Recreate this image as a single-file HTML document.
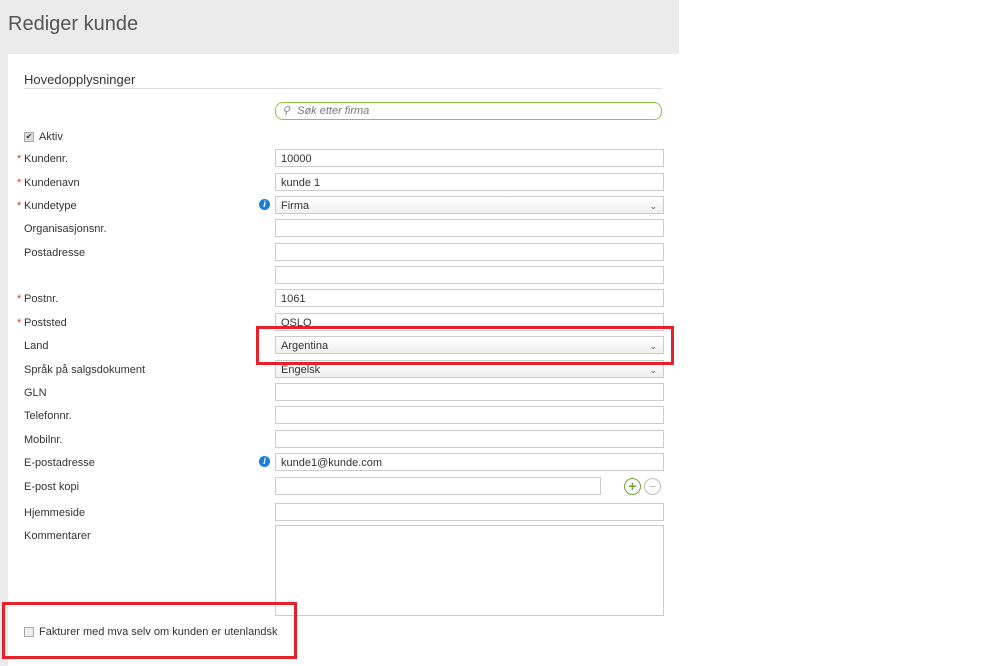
<!DOCTYPE html><html><head><style>
body{margin:0;width:999px;height:666px;background:#fff;font-family:"Liberation Sans",sans-serif;position:relative;overflow:hidden;color:#333}
.bg{position:absolute;left:0;top:0;width:679px;height:666px;background:#ebebeb}
.panel{position:absolute;left:8px;top:54px;width:671px;height:612px;background:#fff}
.t{position:absolute;left:8px;top:13px;font-size:20px;color:#555}
.a{position:absolute}
.lbl{position:absolute;left:24px;font-size:11px;color:#333}
.st{position:absolute;left:17px;font-size:11px;color:#d33}
.in{position:absolute;left:275px;height:16px;border:1px solid #ccc;background:#fff;font-size:11px;line-height:18px;padding-left:5px;box-sizing:content-box;width:382px}
.sel{background:linear-gradient(#fff,#f0f0f0)}
.chev{position:absolute;right:6px;top:0;font-size:9px;color:#555}
.info{position:absolute;left:259px;width:11px;height:11px;border-radius:50%;background:#1a7fd0;color:#fff;font-size:9px;font-weight:bold;font-style:italic;text-align:center;line-height:11px}
.red{position:absolute;border:3px solid #e8202a}
</style></head><body>
<div class="bg"></div><div class="panel"></div>
<div class="t">Rediger kunde</div>
<div class="a" style="left:24px;top:72px;font-size:13px;color:#333">Hovedopplysninger</div>
<div class="a" style="left:24px;top:88px;width:639px;height:1px;background:#ddd"></div>
<div class="a" style="left:275px;top:102px;width:385px;height:16px;border:1.5px solid #8cc63f;border-radius:8px;font-size:11px;font-style:italic;color:#777;line-height:17px"><span style="margin-left:6px;color:#888">&#9906;</span> <span style="margin-left:4px">Søk etter firma</span></div>
<div class="a" style="left:24px;top:132px;width:8px;height:8px;border:1px solid #aaa;background:#ddd;font-size:8px;line-height:8px;text-align:center">✔</div>
<div class="lbl" style="left:39px;top:131px">Aktiv</div>

<div class="st" style="top:153px">*</div><div class="lbl" style="top:153px">Kundenr.</div><div class="in" style="top:149px">10000</div>
<div class="st" style="top:177px">*</div><div class="lbl" style="top:177px">Kundenavn</div><div class="in" style="top:173px">kunde 1</div>
<div class="st" style="top:200px">*</div><div class="lbl" style="top:200px">Kundetype</div><div class="info" style="top:199px">i</div><div class="in sel" style="top:196px">Firma<span class="chev">&#8964;</span></div>
<div class="lbl" style="top:223px">Organisasjonsnr.</div><div class="in" style="top:219px"></div>
<div class="lbl" style="top:247px">Postadresse</div><div class="in" style="top:243px"></div>
<div class="in" style="top:266px"></div>
<div class="st" style="top:293px">*</div><div class="lbl" style="top:293px">Postnr.</div><div class="in" style="top:289px">1061</div>
<div class="st" style="top:317px">*</div><div class="lbl" style="top:317px">Poststed</div><div class="in" style="top:313px">OSLO</div>
<div class="lbl" style="top:340px">Land</div><div class="in sel" style="top:336px">Argentina<span class="chev">&#8964;</span></div>
<div class="lbl" style="top:364px">Språk på salgsdokument</div><div class="in sel" style="top:360px">Engelsk<span class="chev">&#8964;</span></div>
<div class="lbl" style="top:387px">GLN</div><div class="in" style="top:383px"></div>
<div class="lbl" style="top:410px">Telefonnr.</div><div class="in" style="top:406px"></div>
<div class="lbl" style="top:434px">Mobilnr.</div><div class="in" style="top:430px"></div>
<div class="lbl" style="top:457px">E-postadresse</div><div class="info" style="top:456px">i</div><div class="in" style="top:453px">kunde1@kunde.com</div>
<div class="lbl" style="top:481px">E-post kopi</div><div class="in" style="top:477px;width:319px"></div>
<div class="a" style="left:624px;top:478px;width:15px;height:15px;border:1.5px solid #6aa82a;border-radius:50%;color:#6aa82a;font-size:14px;line-height:15px;text-align:center;font-weight:bold">+</div>
<div class="a" style="left:644px;top:478px;width:15px;height:15px;border:1px solid #bbb;border-radius:50%;color:#bbb;font-size:13px;line-height:15px;text-align:center">−</div>
<div class="lbl" style="top:507px">Hjemmeside</div><div class="in" style="top:503px"></div>
<div class="lbl" style="top:530px">Kommentarer</div><div class="in" style="top:525px;height:89px"></div>
<div class="a" style="left:24px;top:627px;width:8px;height:8px;border:1px solid #aaa;background:#eee"></div>
<div class="lbl" style="left:39px;top:626px">Fakturer med mva selv om kunden er utenlandsk</div>
<div class="red" style="left:256px;top:326px;width:412px;height:33px"></div>
<div class="red" style="left:2px;top:602px;width:289px;height:51px"></div>
</body></html>
